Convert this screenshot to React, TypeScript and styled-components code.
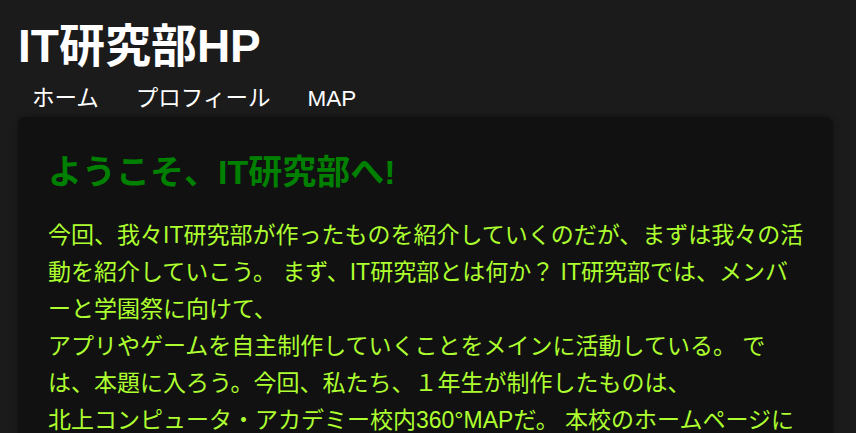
import React from "react";
import styled, { createGlobalStyle } from "styled-components";

const GlobalStyle = createGlobalStyle`
  html, body {
    margin: 0;
    padding: 0;
    background: #1b1b1b;
  }
  body {
    font-family: "Liberation Sans", Arial, "Noto Sans CJK JP", sans-serif;
    color: #ffffff;
  }
`;

const Page = styled.div`
  padding: 16px 23px 0 18px;
  min-height: 433px;
  box-sizing: border-box;
`;

const Title = styled.h1`
  margin: 0;
  font-size: 46px;
  line-height: 60px;
  font-weight: 700;
  color: #ffffff;
`;

const Nav = styled.nav`
  display: flex;
  gap: 37px;
  margin-top: 8px;
  padding-left: 14px;
  height: 30px;
`;

const NavLink = styled.a`
  font-size: 22.5px;
  line-height: 30px;
  color: #ffffff;
  text-decoration: none;
`;

const Card = styled.main`
  margin-top: 3px;
  background: #111111;
  border-radius: 8px;
  padding: 34px 24px 30px 30px;
  box-shadow: 0 0 6px rgba(0, 0, 0, 0.35);
`;

const Heading = styled.h2`
  margin: 0;
  font-size: 34px;
  line-height: 42px;
  font-weight: 700;
  color: #008000;
`;

const Body = styled.p`
  margin: 24px 0 0;
  font-size: 23px;
  line-height: 37px;
  color: #adff2f;
`;

export default function App() {
  return (
    <>
      <GlobalStyle />
      <Page>
        <Title>IT研究部HP</Title>
        <Nav>
          <NavLink href="#">ホーム</NavLink>
          <NavLink href="#">プロフィール</NavLink>
          <NavLink href="#">MAP</NavLink>
        </Nav>
        <Card>
          <Heading>ようこそ、IT研究部へ!</Heading>
          <Body>
            今回、我々IT研究部が作ったものを紹介していくのだが、まずは我々の活動を紹介していこう。 まず、IT研究部とは何か？ IT研究部では、メンバーと学園祭に向けて、
            <br />
            アプリやゲームを自主制作していくことをメインに活動している。 では、本題に入ろう。今回、私たち、１年生が制作したものは、
            <br />
            北上コンピュータ・アカデミー校内360°MAPだ。 本校のホームページにも掲載されているので、ぜひ見てほしい。
          </Body>
        </Card>
      </Page>
    </>
  );
}
